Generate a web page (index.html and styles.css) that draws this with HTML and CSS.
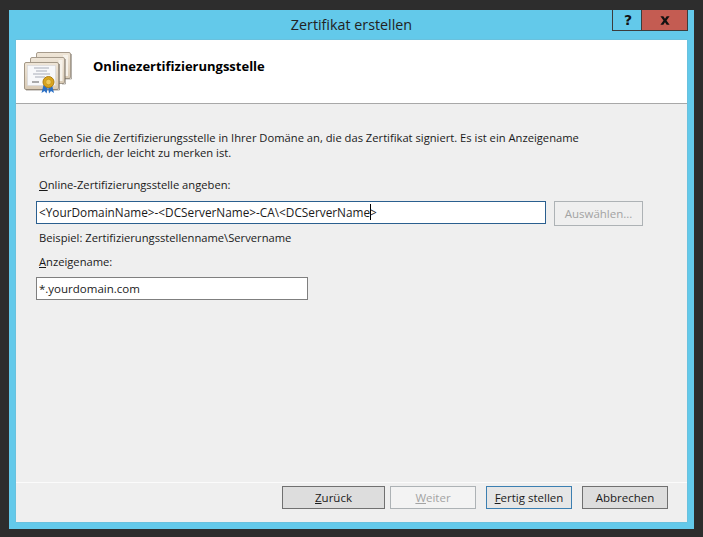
FILE: index.html
```html
<!DOCTYPE html>
<html lang="de">
<head>
<meta charset="utf-8">
<title>Zertifikat erstellen</title>
<link rel="stylesheet" href="styles.css">
</head>
<body>
<div class="window">
  <div class="titlebar">
    <div class="title">Zertifikat erstellen</div>
    <div class="caption-buttons">
      <div class="cap cap-help">?</div>
      <div class="cap cap-close">
        <svg width="10" height="9" viewBox="0 0 12 10"><path d="M0.500 0h3.500l2 3 2-3h3.500L7.800 5l3.700 5H8L6 7l-2 3H0.500l3.700-5z" fill="#111"/></svg>
      </div>
    </div>
  </div>
  <div class="client">
    <header class="head">
      <svg class="cert" width="52" height="44" viewBox="0 0 52 44">
        <defs>
          <linearGradient id="p" x1="0" y1="0" x2="0" y2="1"><stop offset="0" stop-color="#efe6d8"/><stop offset="1" stop-color="#d9cbb6"/></linearGradient>
        </defs>
        <rect x="12.500" y="0.500" width="34" height="26" rx="1.500" fill="url(#p)" stroke="#a79c8d"/>
        <rect x="39" y="3" width="5" height="21" fill="#f6f2ea"/>
        <path d="M47.500 2v25H14" fill="none" stroke="#6b6358" stroke-opacity=".5"/>
        <rect x="6.500" y="5.500" width="34" height="26" rx="1.500" fill="url(#p)" stroke="#a79c8d"/>
        <rect x="34.500" y="8" width="4" height="21" fill="#f6f2ea"/>
        <path d="M41.500 7v25H38" fill="none" stroke="#6b6358" stroke-opacity=".5"/>
        <rect x="0.500" y="10.500" width="34" height="27" rx="1.500" fill="url(#p)" stroke="#a39887"/>
        <path d="M35.500 12v26H2" fill="none" stroke="#6b6358" stroke-opacity=".6"/>
        <rect x="3.500" y="13.500" width="28" height="20" fill="#f7f8fa" stroke="#cfd3da" stroke-width="0.500"/>
        <path d="M10 16h15M12 19h11M9 22h17M11 25h10" stroke="#a8adb8" stroke-width="1"/>
        <path d="M8 30h7" stroke="#777" stroke-width="1.200"/>
        <path d="M19.500 33l-2 8 3-2 2 2.500 1.500-7zM24 34l1 7.500 2-2.500 3 2-2-8z" fill="#2a6fc4"/>
        <circle cx="24.500" cy="30" r="5.500" fill="#d9a520" stroke="#b07f10"/>
        <circle cx="24.500" cy="30" r="2.800" fill="#efc95a" stroke="#b8890f" stroke-width="0.600"/>
      </svg>
      <h1 class="head-title">Onlinezertifizierungsstelle</h1>
    </header>
    <main class="body">
      <p class="intro">Geben Sie die Zertifizierungsstelle in Ihrer Domäne an, die das Zertifikat signiert. Es ist ein Anzeigename<br>erforderlich, der leicht zu merken ist.</p>
      <label class="label label-ca"><u>O</u>nline-Zertifizierungsstelle angeben:</label>
      <div class="ca-row">
        <div class="input input-focus">&lt;YourDomainName&gt;-&lt;DCServerName&gt;-CA\&lt;DCServerName<span class="caret"></span>&gt;</div>
        <div class="btn btn-disabled btn-select">Auswählen...</div>
      </div>
      <div class="label label-example">Beispiel: Zertifizierungsstellenname\Servername</div>
      <label class="label label-name"><u>A</u>nzeigename:</label>
      <div class="input input-name">*.yourdomain.com</div>
    </main>
    <footer class="foot">
      <div class="btn btn-back"><span><u>Z</u>urück</span></div>
      <div class="btn btn-disabled btn-next"><span><u>W</u>eiter</span></div>
      <div class="btn btn-default btn-finish"><span><u>F</u>ertig stellen</span></div>
      <div class="btn btn-cancel"><span>Abbrechen</span></div>
    </footer>
  </div>
</div>
</body>
</html>
```
FILE: styles.css
```css
* { box-sizing: border-box; }
html, body { margin: 0; height: 100%; }
body {
  background: #2d2d2d;
  padding: 10px 9px 8px 9px;
  font-family: "Open Sans", "Noto Sans", sans-serif;
  font-size: 11.500px;
  color: #1a1a1a;
  overflow: hidden;
}
.window {
  height: 519px;
  background: #63c9ea;
  padding: 0 7px 7px 7px;
  display: flex;
  flex-direction: column;
}
.titlebar {
  height: 30px;
  flex: none;
  position: relative;
  display: flex;
  justify-content: center;
}
.title {
  font-size: 14.300px;
  line-height: 30px;
  color: #222;
}
.caption-buttons {
  position: absolute;
  top: 0;
  right: -1px;
  display: flex;
  height: 21px;
}
.cap {
  height: 21px;
  border: 1px solid #3c3c3c;
  border-top: 0;
  display: flex;
  align-items: center;
  justify-content: center;
}
.cap-help {
  width: 29px;
  border-right: 0;
  font: bold 14px "DejaVu Sans", sans-serif;
  color: #111;
  padding: 0 0 1px 2px;
}
.cap-close {
  width: 47px;
  background: #c45c52;
  border-left: 1px solid #3c3c3c;
}
.client {
  flex: 1;
  background: #efefef;
  display: flex;
  flex-direction: column;
  box-shadow: 0 0 1px #8a9aa5;
  min-height: 0;
}
.head {
  height: 64px;
  flex: none;
  background: #fff;
  border-bottom: 1px solid #a8a8a8;
  display: flex;
  align-items: flex-start;
  padding: 12px 0 0 8px;
}
.cert { flex: none; filter: blur(0.3px); }
.head-title {
  margin: 5px 0 0 17px;
  font-size: 13px;
  font-weight: 700;
  line-height: 18px;
  color: #000;
}
.body {
  flex: 1;
  padding: 26px 0 0 20px;
  min-height: 0;
}
.intro {
  margin: 0 0 0 3px;
  line-height: 15px;
  font-size: 11.200px;
}
.label {
  display: block;
  font-size: 11.200px;
  line-height: 16px;
  margin-left: 3px;
}
.label-ca { margin-top: 17px; }
.ca-row {
  display: flex;
  align-items: flex-start;
  margin-top: 8px;
}
.input {
  background: #fff;
  border: 1px solid #7f7f7f;
  height: 23px;
  line-height: 21px;
  padding-left: 2px;
  font-size: 11.800px;
  white-space: nowrap;
}
.input-focus {
  width: 510px;
  border-color: #2a5f8f;
  position: relative;
}
.caret {
  display: inline-block;
  width: 1px;
  height: 16px;
  background: #000;
  vertical-align: -3px;
  margin-right: -1px;
}
.input-name { width: 272px; margin-top: 7px; font-size: 11.500px; }
.btn {
  height: 23px;
  border: 1px solid #707070;
  background: #dddddd;
  display: flex;
  align-items: center;
  justify-content: center;
  font-size: 11.500px;
  line-height: 16px;
  color: #1a1a1a;
}
.btn-disabled {
  background: #f3f3f3;
  border-color: #adb2b5;
  color: #a3a3a3;
}
.btn-default {
  background: #e6e6e6;
  border-color: #3c7fb1;
}
.btn-select {
  width: 89px;
  height: 25px;
  margin-left: 8px;
  background: #efefef;
}
.label-example { margin-top: 4px; }
.label-name { margin-top: 8px; }
.foot {
  flex: none;
  height: 40px;
  border-top: 1px solid #fbfbfb;
  display: flex;
  justify-content: flex-end;
  padding: 3px 19px 0 0;
}
.btn-back { width: 103px; }
.btn-next { width: 86px; margin-left: 5px; }
.btn-finish { width: 86px; margin-left: 10px; }
.btn-cancel { width: 86px; margin-left: 10px; }
```
